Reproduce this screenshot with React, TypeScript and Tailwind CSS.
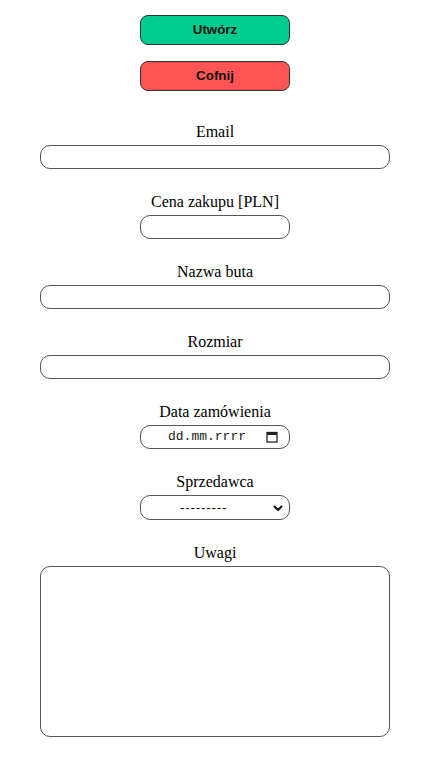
import type { ReactNode } from 'react';

function Field({ label, children }: { label: string; children: ReactNode }) {
  return (
    <div className="flex flex-col items-center">
      <label className="block text-[16px] leading-[18px] text-black">{label}</label>
      <div className="mt-[4px] flex justify-center">{children}</div>
    </div>
  );
}

const box = 'box-border rounded-[10px] border border-[#555] bg-white';

export default function App() {
  return (
    <div className="flex min-h-[769px] flex-col items-center bg-white pl-[3px] pt-[15px] font-['Liberation_Serif',serif]">
      <button
        className="h-[30px] w-[150px] rounded-[8px] border border-[#333] bg-[#00cc90] font-['Liberation_Sans',sans-serif] text-[13.33px] font-bold text-[#111]"
        type="button"
      >
        Utwórz
      </button>
      <button
        className="mt-[16px] h-[30px] w-[150px] rounded-[8px] border border-[#333] bg-[#ff5555] font-['Liberation_Sans',sans-serif] text-[13.33px] font-bold text-[#111]"
        type="button"
      >
        Cofnij
      </button>

      <div className="mt-[32px] flex flex-col items-center gap-[24px]">
        <Field label="Email">
          <input className={`${box} h-[24px] w-[350px]`} type="text" />
        </Field>
        <Field label="Cena zakupu [PLN]">
          <input className={`${box} h-[24px] w-[150px]`} type="text" />
        </Field>
        <Field label="Nazwa buta">
          <input className={`${box} h-[24px] w-[350px]`} type="text" />
        </Field>
        <Field label="Rozmiar">
          <input className={`${box} h-[24px] w-[350px]`} type="text" />
        </Field>
        <Field label="Data zamówienia">
          <div className={`${box} flex h-[24px] w-[150px] items-center pl-[27px] pr-[11px]`}>
            <span className="font-['Liberation_Mono',monospace] text-[13px] text-[#222]">dd.mm.rrrr</span>
            <svg className="ml-auto" width="12" height="12" viewBox="0 0 12 12">
              <rect x="1" y="1.5" width="10" height="9.5" fill="none" stroke="#222" strokeWidth="1.3" />
              <rect x="1" y="1.5" width="10" height="2.5" fill="#222" />
            </svg>
          </div>
        </Field>
        <Field label="Sprzedawca">
          <div className={`${box} flex h-[25px] w-[150px] items-center pl-[39px] pr-[5px]`}>
            <span className="font-['Liberation_Sans',sans-serif] text-[13.33px] leading-none tracking-[0.8px] text-black">
              ---------
            </span>
            <svg className="ml-auto" width="12" height="12" viewBox="0 0 12 12">
              <path d="M2.5 4.5 6 8 9.5 4.5" fill="none" stroke="#111" strokeWidth="2" strokeLinecap="round" strokeLinejoin="round" />
            </svg>
          </div>
        </Field>
        <Field label="Uwagi">
          <textarea className={`${box} h-[171px] w-[350px] resize-none`} />
        </Field>
      </div>
    </div>
  );
}
